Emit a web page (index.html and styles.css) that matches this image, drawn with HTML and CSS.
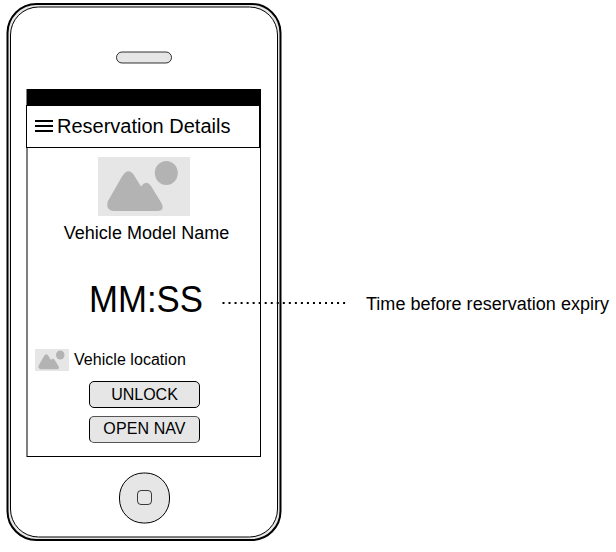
FILE: index.html
```
<!DOCTYPE html>
<html lang="en">
<head>
<meta charset="utf-8">
<title>Reservation Details</title>
<link rel="stylesheet" href="styles.css">
</head>
<body>
<svg class="hidden-defs" width="0" height="0">
  <symbol id="picture" viewBox="0 0 92 59" preserveAspectRatio="none">
    <rect width="92" height="59" fill="#e6e6e6"/>
    <path d="M10 44 L24 19.500Q30.500 9.500 36.500 19L43 29.500Q48 22.500 53 29L64 47Q66.500 54 60 54H16Q7 53 10 44Z" fill="#b3b3b3"/>
    <ellipse cx="68.300" cy="16" rx="11.500" ry="12" fill="#b3b3b3"/>
  </symbol>
</svg>
<main class="board">
  <section class="phone">
    <svg class="frame" width="290" height="552" fill="#e6e6e6" stroke="#000">
      <rect x="7.500" y="4" width="273" height="536" rx="29" stroke-width="2"/>
      <rect x="10.500" y="7" width="267" height="530" rx="28" fill="#fff"/>
      <rect x="116.500" y="52" width="55" height="11" rx="5.500" stroke-opacity=".8"/>
      <rect x="27" y="89.500" width="233.500" height="367" fill="#fff"/>
      <rect x="27" y="89" width="234" height="17" fill="#000" stroke="none"/>
      <rect x="26.500" y="105.500" width="233" height="42" fill="#fff"/>
      <rect x="119.500" y="473" width="50" height="50" rx="24"/>
      <rect x="137.500" y="490.500" width="14" height="14" rx="3.500" stroke-opacity=".75"/>
    </svg>
    <div class="screen">
      <header class="header">
        <svg class="menu" width="18" height="12" stroke="#000" stroke-width="2"><path d="M0 1H18M0 6H18M0 11H18"/></svg>
        <h1>Reservation Details</h1>
      </header>
      <svg class="photo"><use href="#picture"/></svg>
      <p class="model">Vehicle Model Name</p>
      <p class="timer">MM:SS</p>
      <div class="location">
        <svg class="thumb"><use href="#picture"/></svg>
        <span>Vehicle location</span>
      </div>
      <div class="actions">
        <button>UNLOCK</button>
        <button class="nav">OPEN NAV</button>
      </div>
    </div>
  </section>
  <svg class="leader" width="125" height="4"><path d="M.5 2H124" stroke="#000" stroke-width="2" stroke-dasharray="2 4.030"/></svg>
  <p class="note">Time before reservation expiry</p>
</main>
</body>
</html>
```
FILE: styles.css
```
body {
  margin: 0;
  background: #fff;
  color: #000;
  font-family: "Liberation Sans", Arial, sans-serif;
  overflow: hidden;
}
p, h1 { margin: 0; font-weight: normal; white-space: nowrap; }
svg { display: block; flex: none; }
.hidden-defs { position: absolute; }
.board { position: relative; display: flex; width: 616px; height: 552px; }
.phone { position: relative; flex: none; width: 290px; height: 552px; }
.frame { position: absolute; top: 0; left: 0; }
.screen {
  position: relative;
  display: flex;
  flex-direction: column;
  align-items: center;
  width: 234px;
  margin: 105px 0 0 27px;
}
.header {
  display: flex;
  align-items: center;
  align-self: stretch;
  gap: 4px;
  height: 42px;
  padding-left: 8px;
}
.header h1 { font-size: 20px; line-height: 24px; }
.photo { width: 92px; height: 59px; margin: 10px 0 6px; }
.model { font-size: 18px; line-height: 22px; margin-left: 5px; letter-spacing: .03px; }
.timer {
  font-size: 36px;
  line-height: 42px;
  margin: 35px 0 28px 5px;
  transform: scaleX(.966);
}
.location {
  display: flex;
  align-items: center;
  align-self: stretch;
  gap: 5px;
  height: 22px;
  padding-left: 8px;
  font-size: 16px;
  letter-spacing: .04px;
}
.thumb { width: 34px; height: 22px; }
.actions { display: flex; flex-direction: column; gap: 8px; margin: 10px 0 0 1px; }
button {
  width: 111px;
  height: 27px;
  padding: 0;
  border: 1px solid #000;
  border-radius: 5px;
  background: #e6e6e6;
  color: #000;
  font: 16px/25px "Liberation Sans", Arial, sans-serif;
}
.nav { padding-bottom: 2px; line-height: 23px; letter-spacing: .1px; border-color: #000; border-top-color: #555; border-bottom-color: #555; }
.leader { position: absolute; left: 222px; top: 301px; }
.note { font-size: 18px; line-height: 22px; margin: 293px 0 0 76px; letter-spacing: .02px; }
```
